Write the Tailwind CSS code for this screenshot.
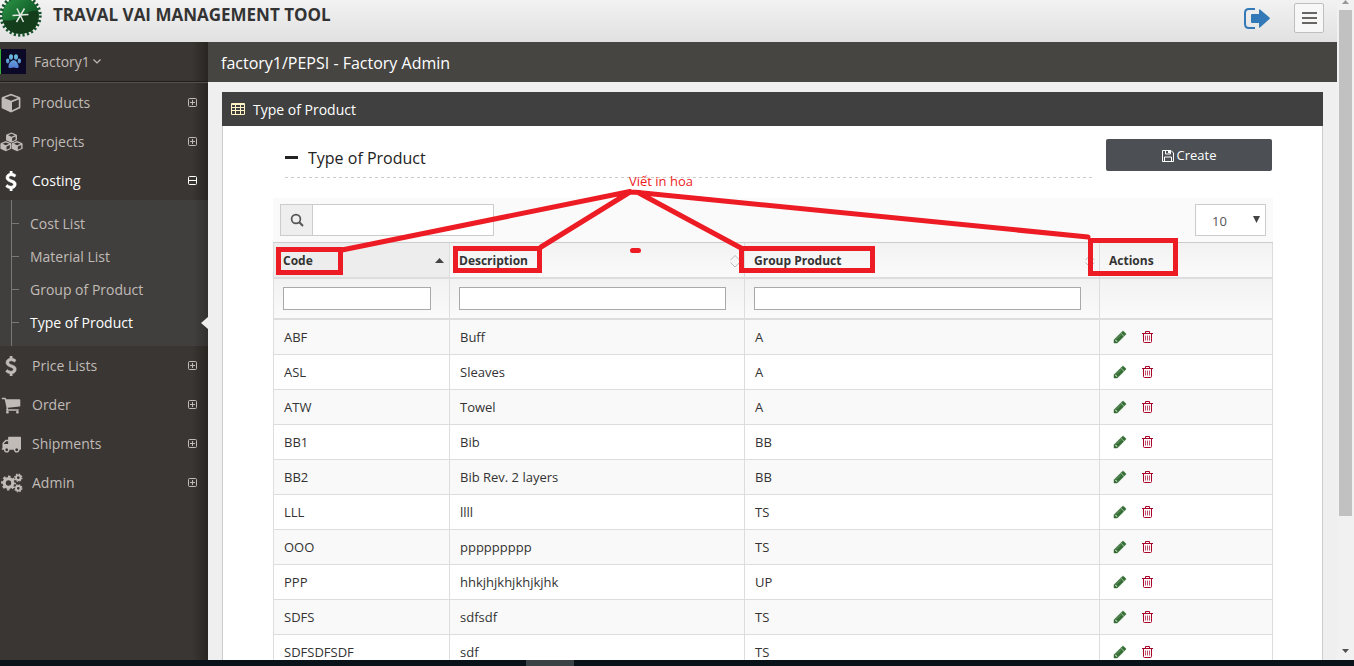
<!DOCTYPE html>
<html lang="en">
<head>
<meta charset="utf-8">
<title>Type of Product</title>
<script src="https://cdn.jsdelivr.net/npm/@tailwindcss/browser@4"></script>
</head>
<body class="h-screen overflow-hidden flex flex-col bg-[#efefef] font-['Open_Sans','Noto_Sans',sans-serif] text-[13px] text-[#333]">
<svg class="hidden" aria-hidden="true">
  <symbol id="cube" viewBox="0 0 20 20"><path fill="currentColor" fill-rule="evenodd" d="M10 .8 18.6 4q.8.4.8 1.2v9.200q0 .8-.8 1.200L10 19.600 1.400 15.600Q.6 15.200.6 14.400V5.200Q.6 4.400 1.400 4ZM10 2.500 3.200 5.100 10 7.700 16.800 5.100ZM11 9.200V17.300L17.800 14V6.600Z"/></symbol>
  <symbol id="cubes" viewBox="0 0 24 20"><g fill="currentColor" fill-rule="evenodd"><path id="c1" d="M12 0 17 2.200q.7.300.7 1V7.600q0 .6-.6.900L12 10.800 6.900 8.500Q6.300 8.200 6.300 7.600V3.200q0-.7.7-1ZM12 1.500 8.500 3 12 4.500 15.500 3ZM12.700 5.800V9.200L16.200 7.600V4.300Z"/><use href="#c1" x="-5.900" y="8.900"/><use href="#c1" x="5.900" y="8.900"/></g></symbol>
  <symbol id="usd" viewBox="0 0 1792 1792"><path fill="currentColor" stroke="currentColor" stroke-width="50" d="M1362 1185q0 153-99.500 263.500t-258.500 136.500v175q0 14-9 23t-23 9h-135q-13 0-22.500-9.500t-9.500-22.500v-175q-66-9-127.500-31t-101.500-44.500-74-48-46.500-37.500-17.500-18q-17-21-2-41l103-135q7-10 23-12 15-2 24 9l2 2q113 99 243 125 37 8 74 8 81 0 142.500-43t61.500-122q0-28-15-53t-33.500-42-58.500-37.500-66-32-80-32.500q-39-16-61.500-25t-61.500-26.500-62.500-31-56.500-35.500-53.500-42.500-43.500-49-35.500-58-21-66.500-8.500-78q0-138 98-242t255-134v-180q0-13 9.500-22.500t22.500-9.500h135q14 0 23 9t9 23v176q57 6 110.500 23t87 33.500 63.500 37.500 39 29 15 14q17 18 5 38l-81 146q-8 15-23 16-14 3-27-7-3-3-14.500-12t-39-26.500-58.500-32-74.500-26-85.500-11.500q-95 0-155 43t-60 111q0 26 8.500 48t29.500 41.500 39.500 33 56 31 60.500 27 70 27.500q53 20 81 31.500t76 35 75.500 42.500 62 50 53 63.500 31.500 76.500 13 94z"/></symbol>
  <symbol id="cart" viewBox="0 0 1792 1792"><path fill="currentColor" d="M704 1536q0 52-38 90t-90 38-90-38-38-90 38-90 90-38 90 38 38 90zm896 0q0 52-38 90t-90 38-90-38-38-90 38-90 90-38 90 38 38 90zm128-1088v512q0 24-16.500 42.500t-40.500 21.500l-1044 122q13 60 13 70 0 16-24 64h920q26 0 45 19t19 45-19 45-45 19h-1024q-26 0-45-19t-19-45q0-11 8-31.500t16-36 21.500-40 15.500-29.500l-177-823h-204q-26 0-45-19t-19-45 19-45 45-19h256q16 0 28.500 6.500t19.500 15.500 13 24.500 8 26 5.500 29.500 4.500 26h1201q26 0 45 19t19 45z"/></symbol>
  <symbol id="truck" viewBox="0 0 1792 1792"><path fill="currentColor" d="M640 1408q0-52-38-90t-90-38-90 38-38 90 38 90 90 38 90-38 38-90zm-384-512h384v-256h-158q-13 0-22 9l-195 195q-9 9-9 22v30zm1280 512q0-52-38-90t-90-38-90 38-38 90 38 90 90 38 90-38 38-90zm256-1088v1024q0 15-4 26.500t-13.500 18.500-16.500 11.500-23.500 6-22.500 2-25.500 0-22.500-.5q0 106-75 181t-181 75-181-75-75-181h-384q0 106-75 181t-181 75-181-75-75-181h-64q-3 0-22.500.5t-25.500 0-22.500-2-23.500-6-16.500-11.500-13.500-18.500-4-26.500q0-26 19-45t45-19v-320q0-8-.5-35t0-38 2.500-34.500 6.500-37 14-30.500 22.500-30l198-198q19-19 50.500-32t58.500-13h160v-192q0-26 19-45t45-19h1024q26 0 45 19t19 45z"/></symbol>
  <symbol id="cogs" viewBox="0 0 22 20"><g fill="none" stroke="currentColor"><circle cx="7.500" cy="10" r="4.300" stroke-width="3.200"/><circle cx="7.500" cy="10" r="6.400" stroke-width="2" stroke-dasharray="2.600 2.427" stroke-dashoffset="1.300"/><circle cx="17.300" cy="4.700" r="2.300" stroke-width="1.900"/><circle cx="17.300" cy="4.700" r="3.600" stroke-width="1.200" stroke-dasharray="1.500 1.328"/><circle cx="17.300" cy="15.300" r="2.300" stroke-width="1.900"/><circle cx="17.300" cy="15.300" r="3.600" stroke-width="1.200" stroke-dasharray="1.500 1.328"/></g></symbol>
  <symbol id="plus" viewBox="0 0 10 10"><path fill="none" stroke="currentColor" d="M1.500.5h6q1 0 1 1v6q0 1-1 1h-6q-1 0-1-1v-6q0-1 1-1ZM2 4.500h5M4.500 2v5"/></symbol>
  <symbol id="minus" viewBox="0 0 10 10"><path fill="none" stroke="currentColor" d="M1.500.5h6q1 0 1 1v6q0 1-1 1h-6q-1 0-1-1v-6q0-1 1-1ZM1 4.500h7"/></symbol>
  <symbol id="pencil" viewBox="0 0 1792 1792"><path fill="currentColor" stroke="currentColor" stroke-width="60" d="M491 1536l91-91-235-235-91 91v107h128v128h107zm523-928q0-22-22-22-10 0-17 7l-542 542q-7 7-7 17 0 22 22 22 10 0 17-7l542-542q7-7 7-17zm-54-192l416 416-832 832h-416v-416zm683 96q0 53-37 90l-166 166-416-416 166-165q36-38 90-38 53 0 91 38l235 234q37 39 37 91z"/></symbol>
  <symbol id="trash" viewBox="0 0 11 12"><path fill="none" stroke="currentColor" d="M0 2.500h11M3.500 2V.5h4V2M1.500 3v7.500q0 1 1 1h6q1 0 1-1V3"/><path fill="none" stroke="currentColor" stroke-opacity=".7" d="M3.500 4.500v5M5.500 4.500v5M7.500 4.500v5"/></symbol>
  <symbol id="sort" viewBox="0 0 10 14"><path fill="none" stroke="#bbb" d="M.5 6 5 1.500 9.500 6M.5 8.500 5 13 9.500 8.500"/></symbol>
</svg>

<div class="flex-1 min-h-0 flex">
  <div class="flex-1 min-w-0 flex flex-col overflow-hidden">
    <header class="h-[42px] shrink-0 flex bg-linear-to-b from-[#f2f2f2] to-[#e1e1e1]">
      <svg class="w-[42px] h-[38px] shrink-0" viewBox="0 0 42 38" aria-label="Logo">
        <defs><linearGradient id="lg" x1="0" y1="0" x2="1" y2="1"><stop offset="0" stop-color="#2f9a4a"/><stop offset=".5" stop-color="#17692f"/><stop offset="1" stop-color="#0c3a18"/></linearGradient></defs>
        <circle cx="20.500" cy="15.500" r="18.500" fill="url(#lg)"/>
        <circle cx="20.500" cy="15.500" r="19.500" fill="none" stroke="#17512a" stroke-width="3.400" stroke-dasharray="2.200 2.176"/>
        <path d="M3 20Q14 22 22 16T38 11Q41 33 21 33.500 6 34 3 20Z" fill="#143d1c"/>
        <path d="M12.500 15.500 28.500 14.500M17 8.500 23.500 22M24.500 8.500 16.500 22" stroke="#dfe8e0" stroke-width="1.500" fill="none"/>
      </svg>
      <h1 class="ml-[11px] mt-[3px] text-[17px] leading-6 font-bold">TRAVAL VAI MANAGEMENT TOOL</h1>
      <a href="#" class="ml-auto mt-2 text-[#3379b7]" aria-label="Sign out"><svg class="w-[26px] h-[21px]" viewBox="0 0 26 21"><path fill="none" stroke="currentColor" stroke-width="2" d="M11 1H5Q1 1 1 5v11q0 4 4 4h6"/><path fill="currentColor" d="M7 7q0-1 1-1h7V2q0-1.200 1-.6l9.500 8.200q.6.700 0 1.500L16 19.600q-1 .6-1-.6v-4H8q-1 0-1-1Z"/></svg></a>
      <button class="ml-6 mr-[13px] mt-[3px] size-[30px] rounded-xs border border-[#bfbfbf] bg-[#f7f7f7] flex flex-col gap-[3px] items-center justify-center" aria-label="Menu"><span class="w-[15px] h-0.5 bg-[#686565]"></span><span class="w-[15px] h-0.5 bg-[#686565]"></span><span class="w-[15px] h-0.5 bg-[#686565]"></span></button>
    </header>

    <div class="flex-1 min-h-0 flex">
      <aside class="w-[208px] shrink-0 bg-[linear-gradient(to_left,#292521,#3a3633_16px)] text-[#c0bbb7] text-[14px]">
        <div class="h-10 border-b border-[#1f1d1b] flex items-center">
          <svg class="w-[26px] h-[25px]" viewBox="0 0 26 25"><defs><linearGradient id="paw" x1="0" y1="0" x2="0" y2="1"><stop offset="0" stop-color="#6cc3dc"/><stop offset="1" stop-color="#5479d2"/></linearGradient></defs><path fill="#0c0827" d="M0 0h26v25H0z"/><path fill="#35b234" d="M0 0h1v25H0z"/><path fill="url(#paw)" d="M13.500 11q2.500 0 4 3t1 4.500q-1.500 1-3 .3t-4 0q-2 .7-3-.3-.6-2 1-4.500t4-3ZM9 8a2 2.800 0 1 0 4 0 2 2.800 0 1 0-4 0ZM14 8a2 2.800 0 1 0 4 0 2 2.800 0 1 0-4 0ZM6 12a1.700 2.400 0 1 0 3.400 0 1.700 2.400 0 1 0-3.400 0ZM17.600 12a1.700 2.400 0 1 0 3.400 0 1.700 2.400 0 1 0-3.400 0Z"/></svg>
          <a href="#" class="ml-2 flex items-center gap-[3px]">Factory1 <svg class="w-2 h-[5px]" viewBox="0 0 8 5"><path fill="none" stroke="currentColor" stroke-width="1.200" d="M.5.5 4 4 7.500.5"/></svg></a>
        </div>
        <nav class="border-t border-[#55514e]">
          <a href="#" class="h-[39px] flex items-center pl-px pr-[10px]"><svg class="size-5 mr-[11px]"><use href="#cube"/></svg>Products<svg class="size-[10px] ml-auto"><use href="#plus"/></svg></a>
          <a href="#" class="h-[39px] flex items-center pr-[10px]"><svg class="w-[23px] h-5 mr-[9px]"><use href="#cubes"/></svg>Projects<svg class="size-[10px] ml-auto"><use href="#plus"/></svg></a>
          <a href="#" class="h-[39px] flex items-center pl-px pr-[10px] text-white"><svg class="size-5 mr-[11px]"><use href="#usd"/></svg>Costing<svg class="size-[10px] ml-auto"><use href="#minus"/></svg></a>
          <div class="pt-[7px] pb-[7px] pl-[11px] bg-[linear-gradient(to_left,#32312f,#403f3d_14px)] relative">
            <span class="absolute left-[11px] top-0 bottom-0 w-px bg-[#7a7875]"></span>
            <a href="#" class="h-[33px] flex items-center gap-[11px]"><span class="w-2 h-px bg-[#7a7875]"></span>Cost List</a>
            <a href="#" class="h-[33px] flex items-center gap-[11px]"><span class="w-2 h-px bg-[#7a7875]"></span>Material List</a>
            <a href="#" class="h-[33px] flex items-center gap-[11px]"><span class="w-2 h-px bg-[#7a7875]"></span>Group of Product</a>
            <a href="#" class="h-[33px] flex items-center gap-[11px] text-white"><span class="w-2 h-px bg-[#7a7875]"></span>Type of Product<svg class="w-[7px] h-3 ml-auto" viewBox="0 0 7 12"><path fill="#efefef" d="M7 0v12L0 6Z"/></svg></a>
          </div>
          <a href="#" class="h-[39px] flex items-center pl-px pr-[10px]"><svg class="size-5 mr-[11px]"><use href="#usd"/></svg>Price Lists<svg class="size-[10px] ml-auto"><use href="#plus"/></svg></a>
          <a href="#" class="h-[39px] flex items-center pl-px pr-[10px]"><svg class="size-5 mr-[11px]"><use href="#cart"/></svg>Order<svg class="size-[10px] ml-auto"><use href="#plus"/></svg></a>
          <a href="#" class="h-[39px] flex items-center pl-px pr-[10px]"><svg class="size-5 mr-[11px]"><use href="#truck"/></svg>Shipments<svg class="size-[10px] ml-auto"><use href="#plus"/></svg></a>
          <a href="#" class="h-[39px] flex items-center pl-px pr-[10px]"><svg class="w-[22px] h-5 mr-[9px]"><use href="#cogs"/></svg>Admin<svg class="size-[10px] ml-auto"><use href="#plus"/></svg></a>
        </nav>
      </aside>

      <main class="flex-1 min-w-0">
        <h2 class="h-10 pl-[13px] pt-0.5 flex items-center bg-[#474542] text-white text-base">factory1/PEPSI - Factory Admin</h2>
        <section class="mt-[10px] ml-[14px] mr-[14px]">
          <h3 class="h-[34px] pl-[9px] flex items-center gap-2 bg-[#404040] text-white text-[14px]">
            <svg class="w-[14px] h-3" viewBox="0 0 14 12"><path fill="#fff3c4" fill-rule="evenodd" d="M1 0h12q1 0 1 1v10q0 1-1 1H1q-1 0-1-1V1q0-1 1-1ZM1 2v2h3V2ZM5 2v2h4V2ZM10 2v2h3V2ZM1 5v2h3V5ZM5 5v2h4V5ZM10 5v2h3V5ZM1 8v3h3V8ZM5 8v3h4V8ZM10 8v3h3V8Z"/></svg>
            <span>Type of Product</span>
          </h3>
          <div class="bg-white border-x border-[#ccc] pt-[13px] pl-[50px] pr-[49px]">
            <div class="flex items-start">
              <div class="flex-1 ml-3 mr-3 pb-0.5 h-[39px] flex items-center text-base text-[#222] bg-[repeating-linear-gradient(to_right,#ccc_0_3px,transparent_3px_6px)] bg-[length:100%_1px] bg-no-repeat bg-bottom"><span class="w-[13px] h-[3px] bg-[#222] mr-[10px]"></span>Type of Product</div>
              <button class="w-[166px] h-8 mr-px pt-0.5 rounded-xs bg-[#4c4f53] text-white flex items-center justify-center gap-[3px]"><svg class="size-3" viewBox="0 0 12 12"><path fill="none" stroke="currentColor" d="M.5.5h8.500l2.500 2.500v8.500H.5ZM3.500.5v3.500h5V.5M2.500 11.500V7h7v4.500"/><path fill="currentColor" d="M6 1h2v2H6z"/></svg>Create</button>
            </div>
            <div class="mt-5 h-[45px] pt-1.5 pl-[7px] pr-[7px] flex justify-between bg-[#fafafa] border-b border-[#ccc]">
              <div class="w-[214px] h-8 flex border border-[#ccc] bg-white">
                <label for="search" class="w-8 shrink-0 bg-[#eee] border-r border-[#ccc] flex items-center justify-center" aria-label="Search"><svg class="size-[14px] text-[#555]" viewBox="0 0 14 14"><circle cx="6" cy="6" r="4.400" fill="none" stroke="currentColor" stroke-width="1.700"/><path d="m9.300 9.300 3.700 3.700" stroke="currentColor" stroke-width="2"/></svg></label>
                <input id="search" type="text" class="flex-1 min-w-0 px-3 outline-none">
              </div>
              <div class="relative">
                <select class="w-[71px] h-8 border border-[#ccc] bg-white pl-4 pt-1 appearance-none text-[#555]" aria-label="Rows per page"><option>10</option></select>
                <svg class="absolute right-[6px] top-3 w-[7px] h-[7px] pointer-events-none" viewBox="0 0 7 7"><path fill="#444" d="M0 0h7L3.500 7Z"/></svg>
              </div>
            </div>
            <table class="w-full table-fixed border-separate border-spacing-0 border-l border-[#ddd] text-left">
              <colgroup><col class="w-[176px]"><col class="w-[295px]"><col class="w-[355px]"><col class="w-[173px]"></colgroup>
              <thead>
                <tr class="h-9 *:border-r *:border-b-2 *:border-[#ddd] *:pl-[9px] *:pt-0.5 *:bg-linear-to-b *:from-[#f2f2f2] *:to-[#fafafa] text-[12px]">
                  <th class="bg-[linear-gradient(#ededed,#ededed)]!"><div class="flex items-center justify-between">Code<svg class="w-[9px] h-[5px] mr-[5px] mb-0.5" viewBox="0 0 9 5"><path fill="#444" d="M4.500 0 9 5H0Z"/></svg></div></th>
                  <th><div class="flex items-center justify-between">Description<svg class="w-[10px] h-[14px] mr-1"><use href="#sort"/></svg></div></th>
                  <th><div class="flex items-center justify-between">Group Product<svg class="w-[10px] h-[14px] mr-1"><use href="#sort"/></svg></div></th>
                  <th>Actions</th>
                </tr>
                <tr class="h-[41px] *:border-r *:border-b-2 *:border-[#ddd] *:pl-[9px] *:pr-[18px] *:bg-linear-to-b *:from-[#f2f2f2] *:to-[#fafafa]">
                  <td><input type="text" aria-label="Filter code" class="block w-full h-[23px] border border-[#a9a9a9] bg-white px-1"></td>
                  <td><input type="text" aria-label="Filter description" class="block w-full h-[23px] border border-[#a9a9a9] bg-white px-1"></td>
                  <td><input type="text" aria-label="Filter group product" class="block w-full h-[23px] border border-[#a9a9a9] bg-white px-1"></td>
                  <td></td>
                </tr>
              </thead>
              <tbody id="rows"></tbody>
            </table>
          </div>
        </section>
      </main>
    </div>
  </div>
  <div class="w-[17px] shrink-0 bg-[#f1f1f1] flex flex-col items-center">
    <svg class="w-[7px] h-1" viewBox="0 0 7 4"><path fill="#999" d="M3.500 0 7 4H0Z"/></svg>
    <div class="mt-1.5 w-[13px] h-[506px] bg-[#c1c1c1]"></div>
    <svg class="w-[7px] h-1 mt-auto mb-[7px]" viewBox="0 0 7 4"><path fill="#505050" d="M0 0h7L3.500 4Z"/></svg>
  </div>
</div>
<footer class="h-1.5 shrink-0 bg-[#081218] flex"><span class="ml-[526px] w-12 bg-[#3a4246]"></span></footer>

<div class="absolute left-0 top-0 pointer-events-none">
  <svg class="w-[1200px] h-[300px]" viewBox="0 0 1200 300" fill="none" stroke="#ed1c24" stroke-width="5">
    <path d="M278.500 249.500h62v23h-62ZM455.500 248.500h84v22h-84ZM741.500 248.500h131v22h-131ZM1090.500 240.500h85v33h-85Z"/>
    <path stroke-linecap="round" stroke-linejoin="round" d="M342 250 630 191.500M541 247 630 192 640 192.500M638 192.500 741 248M638 192.500 1088 237M632.500 250.500h6"/>
  </svg>
  <span class="absolute left-[629px] top-[171px] leading-5 text-[#ed1c24] whitespace-nowrap">Viết in hoa</span>
</div>

<template id="row">
  <tr class="h-[35px] odd:bg-[#f9f9f9] *:border-r *:border-b *:border-[#ddd] *:pl-[10px] *:pt-0.5">
    <td></td><td></td><td></td>
    <td><div class="flex items-center gap-[15px] pl-[3px] pb-0.5"><button class="text-[#356e35]" aria-label="Edit"><svg class="size-[14px]"><use href="#pencil"/></svg></button><button class="text-[#a90329]" aria-label="Delete"><svg class="w-[11px] h-3"><use href="#trash"/></svg></button></div></td>
  </tr>
</template>
<script>
const data = [["ABF","Buff","A"],["ASL","Sleaves","A"],["ATW","Towel","A"],["BB1","Bib","BB"],["BB2","Bib Rev. 2 layers","BB"],["LLL","llll","TS"],["OOO","ppppppppp","TS"],["PPP","hhkjhjkhjkhjkjhk","UP"],["SDFS","sdfsdf","TS"],["SDFSDFSDF","sdf","TS"]];
const tpl = document.getElementById("row");
for (const r of data) {
  const n = tpl.content.cloneNode(true);
  const cells = n.querySelectorAll("td");
  r.forEach((t, i) => { cells[i].textContent = t; });
  document.getElementById("rows").append(n);
}
</script>
</body>
</html>
